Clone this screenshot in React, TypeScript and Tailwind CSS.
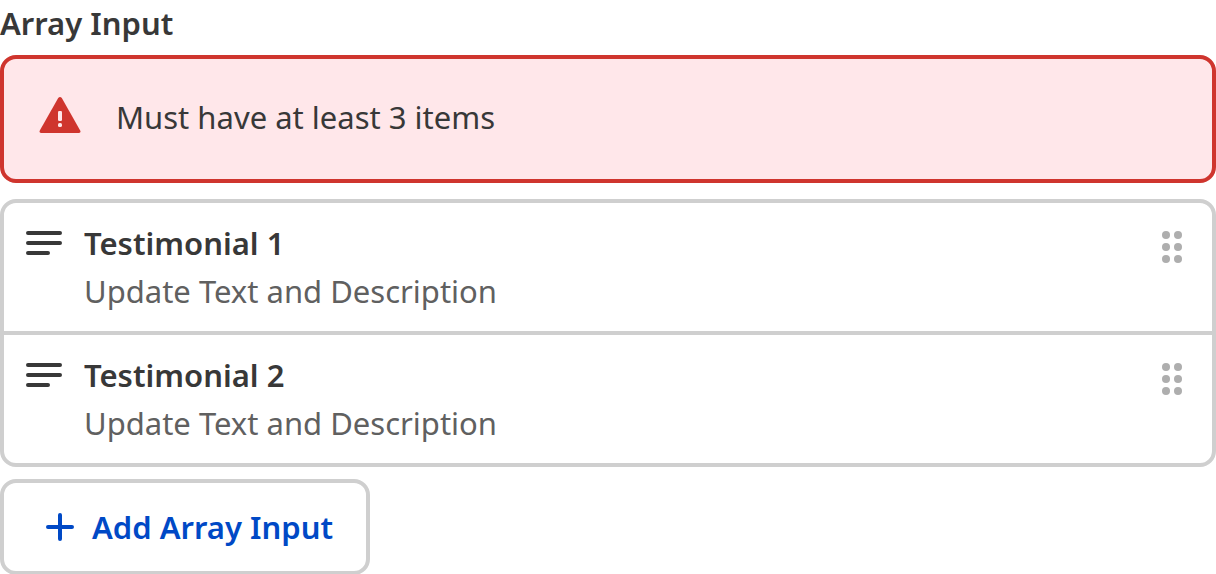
import React from "react";

const items = [
  { id: 1, title: "Testimonial 1", description: "Update Text and Description" },
  { id: 2, title: "Testimonial 2", description: "Update Text and Description" },
];

function WarningIcon() {
  return (
    <svg width="42" height="36" viewBox="0 0 42 36" className="mt-1 shrink-0" aria-hidden="true">
      <path
        d="M19.2 1 Q21 -1 22.8 1 L41.2 33.6 Q42.2 36 40 36 H2 Q-0.2 36 0.8 33.6 Z"
        fill="#cf352e"
      />
      <rect x="19" y="14" width="4" height="10" rx="1.2" fill="#ffe7ea" />
      <rect x="19" y="26" width="4" height="4" rx="1.6" fill="#ffe7ea" />
    </svg>
  );
}

function LinesIcon() {
  return (
    <svg width="36" height="24" viewBox="0 0 36 24" className="mt-3 shrink-0" aria-hidden="true">
      <path d="M2 2H34M2 12H34M2 22H22" stroke="#383838" strokeWidth="4" strokeLinecap="round" />
    </svg>
  );
}

function DragIcon() {
  return (
    <svg width="20" height="32" viewBox="0 0 20 32" aria-hidden="true">
      {[4, 16, 28].map((y) => (
        <g key={y} fill="#aeaeae">
          <circle cx="4" cy={y} r="4" />
          <circle cx="16" cy={y} r="4" />
        </g>
      ))}
    </svg>
  );
}

export default function App() {
  return (
    <main className="bg-white font-['Noto_Sans',sans-serif] text-[31px] leading-12 text-[#383838]">
      <h2 className="pb-[9px] leading-[46px] font-semibold">Array Input</h2>
      <div
        role="alert"
        className="flex items-start gap-[35px] rounded-2xl border-4 border-[#cf352e] bg-[#ffe7ea] px-[35px] pt-[34px] pb-[38px]"
      >
        <WarningIcon />
        <p>Must have at least 3 items</p>
      </div>
      <ul className="mt-4 divide-y-4 divide-[#cfcfcf] rounded-2xl border-4 border-[#cfcfcf]">
        {items.map((item) => (
          <li key={item.id} className="flex items-start px-[22px] py-4">
            <LinesIcon />
            <div className="ml-[22px] grow">
              <h3 className="font-semibold">{item.title}</h3>
              <p className="text-[#606060]">{item.description}</p>
            </div>
            <button type="button" aria-label={`Reorder ${item.title}`} className="mt-3 mr-2">
              <DragIcon />
            </button>
          </li>
        ))}
      </ul>
      <button
        type="button"
        className="mt-3 flex h-24 items-center gap-[18px] rounded-2xl border-4 border-[#cfcfcf] pr-[33px] pl-[42px] font-semibold text-[#0049c6]"
      >
        <svg width="28" height="28" viewBox="0 0 28 28" aria-hidden="true">
          <path d="M14 2V26M2 14H26" stroke="currentColor" strokeWidth="4" strokeLinecap="round" />
        </svg>
        Add Array Input
      </button>
    </main>
  );
}
